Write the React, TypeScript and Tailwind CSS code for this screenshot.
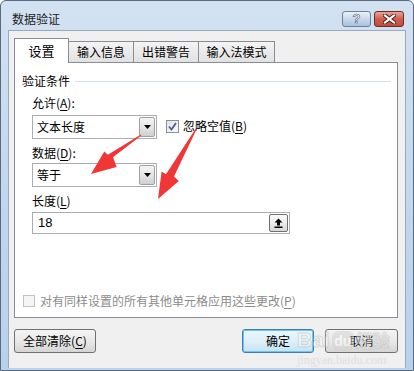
import React from "react";

const font = "font-['Noto_Sans_CJK_SC','Liberation_Sans',sans-serif]";

const Caret = () => (
  <svg width="7" height="4" viewBox="0 0 7 4">
    <path d="M0 0h7L3.5 4z" fill="#000" />
  </svg>
);

const Combo = ({ value }: { value: string }) => (
  <div className="flex h-[24px] w-[125px] items-center border border-[#abadb3] bg-white">
    <span className="flex-1 pl-[4px] text-[12px] leading-[16px] text-black">{value}</span>
    <div className="mr-[1px] flex h-[20px] w-[16px] items-center justify-center rounded-[2px] border border-[#a0a0a0] bg-gradient-to-b from-[#f4f4f4] via-[#e6e6e6] to-[#cfcfcf]">
      <Caret />
    </div>
  </div>
);

const Mnemonic = ({ pre, k, post }: { pre: string; k: string; post: string }) => (
  <span>
    {pre}
    <span className="underline underline-offset-2">{k}</span>
    {post}
  </span>
);

const RedArrows = () => (
  <svg
    className="pointer-events-none absolute left-0 top-0"
    width="414"
    height="371"
    viewBox="0 0 414 371"
  >
    <path
      d="M140.4 134.6 L112 156.3 L115.6 166 L90 173 L103.3 150.5 L106.8 153.7 L139.6 133.8 Z"
      fill="#f03636"
    />
    <path
      d="M195.6 128.3 L173 175.5 L177.8 180 L157 198 L160.6 170.6 L165 173.3 L194.6 127.7 Z"
      fill="#f03636"
    />
  </svg>
);

// faint baidu jingyan watermark over the bottom right corner
const Watermark = () => (
  <div className="pointer-events-none absolute left-[296px] top-[327px] flex flex-col items-start opacity-50">
    <div className="flex items-end gap-[2px] text-[21px] font-bold leading-[23px] text-white [-webkit-text-stroke:1px_#bdbdbd]">
      <span className="font-['Liberation_Sans',sans-serif]">Bai</span>
      <span className="flex h-[20px] w-[22px] items-center justify-center rounded-[6px] bg-[#d2d2d2] font-['Liberation_Sans',sans-serif] text-[14px] text-white [-webkit-text-stroke:0px]">
        du
      </span>
      <span className="text-[17px]">经验</span>
    </div>
    <span className="mt-[2px] font-['Liberation_Serif',serif] text-[12px] leading-[14px] text-[#cfcfcf]">
      jingyan.baidu.com
    </span>
  </div>
);

export default function App() {
  return (
    <div className={`h-[371px] w-[414px] overflow-hidden bg-white ${font}`}>
      <div className="relative flex h-full flex-col rounded-t-[6px] border border-[#5a6b80] bg-gradient-to-b from-[#d3e2f2] via-[#c3d7ed] to-[#b9d1ea]">
        {/* title bar */}
        <div className="flex h-[29px] items-center pl-[11px] pr-[9px] pt-[6px]">
          <span className="flex-1 text-[12px] leading-[16px] text-[#1b1b1b]">数据验证</span>
          <div className="flex items-center gap-[3px]">
            <div className="flex h-[16px] w-[29px] items-center justify-center rounded-[3px] border border-[#6f819a] bg-gradient-to-b from-[#eaf1f9] via-[#c9d9ea] to-[#aac2dc]">
              <span className="font-['Liberation_Sans',sans-serif] text-[13px] font-bold leading-[14px] text-white [-webkit-text-stroke:0.6px_#51637b]">
                ?
              </span>
            </div>
            <div className="flex h-[16px] w-[30px] items-center justify-center rounded-[3px] border border-[#6e2c26] bg-gradient-to-b from-[#e8a497] via-[#cf5d4f] to-[#c04c3c]">
              <svg width="13" height="10" viewBox="0 0 13 10">
                <path d="M2 1.5L11 8.5M11 1.5L2 8.5" stroke="#4b1a16" strokeWidth="4" strokeLinecap="square" />
                <path d="M2 1.5L11 8.5M11 1.5L2 8.5" stroke="#fff" strokeWidth="2.2" strokeLinecap="square" />
              </svg>
            </div>
          </div>
        </div>

        {/* client area */}
        <div className="mx-[7px] flex h-[338px] flex-col border-x border-t border-[#98aac0] bg-[#f0f0f0] pl-[5px] pt-[7px] text-[12px] leading-[16px] text-black">
          {/* tabs */}
          <div className="flex h-[24px] items-end">
            <div className="relative z-10 -mb-px flex h-[25px] w-[55px] items-center justify-center border-x border-t border-[#898c95] bg-white pb-[1px] text-[13px]">
              设置
            </div>
            <div className="flex h-[21px] w-[65px] items-center justify-center border-r border-t border-[#898c95] bg-gradient-to-b from-[#f4f4f4] to-[#e1e1e1]">
              输入信息
            </div>
            <div className="flex h-[21px] w-[65px] items-center justify-center border-r border-t border-[#898c95] bg-gradient-to-b from-[#f4f4f4] to-[#e1e1e1]">
              出错警告
            </div>
            <div className="flex h-[21px] w-[76px] items-center justify-center border-r border-t border-[#898c95] bg-gradient-to-b from-[#f4f4f4] to-[#e1e1e1]">
              输入法模式
            </div>
          </div>

          {/* panel */}
          <div className="flex h-[256px] w-[384px] flex-col border border-[#898c95] bg-white">
            <div className="mt-[10px] flex items-center pl-[7px] pr-[6px]">
              <span>验证条件</span>
              <div className="ml-[5px] h-px flex-1 bg-[#d5dfe5]" />
            </div>

            <div className="mt-[6px] pl-[17px]">
              <Mnemonic pre="允许(" k="A" post="):" />
            </div>
            <div className="mt-[4px] flex items-start pl-[17px]">
              <Combo value="文本长度" />
              <div className="ml-[9px] mt-[3px] flex items-center">
                <div className="flex h-[13px] w-[13px] items-center justify-center border border-[#8e8f8f] bg-gradient-to-br from-[#dfe3e8] to-[#fbfbfb]">
                  <svg width="9" height="9" viewBox="0 0 9 9">
                    <path d="M1 4.5L3.5 7.5L8 1" fill="none" stroke="#4a5f97" strokeWidth="1.8" />
                  </svg>
                </div>
                <span className="ml-[4px]">
                  <Mnemonic pre="忽略空值(" k="B" post=")" />
                </span>
              </div>
            </div>

            <div className="mt-[6px] pl-[17px]">
              <Mnemonic pre="数据(" k="D" post="):" />
            </div>
            <div className="mt-[2px] pl-[17px]">
              <Combo value="等于" />
            </div>

            <div className="mt-[6px] pl-[17px]">
              <Mnemonic pre="长度(" k="L" post=")" />
            </div>
            <div className="mt-[3px] pl-[17px]">
              <div className="flex h-[22px] w-[258px] items-center border border-[#abadb3] bg-white">
                <span className="flex-1 pl-[5px] font-['Liberation_Sans',sans-serif] text-[13px]">18</span>
                <div className="mr-[1px] flex h-[18px] w-[19px] items-center justify-center rounded-[2px] border border-[#707070] bg-gradient-to-b from-[#fafafa] via-[#ececec] to-[#d6d6d6]">
                  <svg width="9" height="10" viewBox="0 0 9 10">
                    <path d="M4.5 0.5L8.5 4.5H6V7.5H3V4.5H0.5Z" fill="#000" />
                    <rect x="0.5" y="8.5" width="8" height="1.5" fill="#000" />
                  </svg>
                </div>
              </div>
            </div>

            <div className="mt-[59px] flex items-center pl-[8px] text-[#8b8b8b]">
              <div className="h-[12px] w-[12px] border border-[#c2c2c2] bg-[#f5f5f5]" />
              <span className="ml-[5px]">
                <Mnemonic pre="对有同样设置的所有其他单元格应用这些更改(" k="P" post=")" />
              </span>
            </div>
          </div>

          {/* buttons */}
          <div className="mt-[11px] flex items-center pr-[7px]">
            <div className="flex h-[24px] w-[82px] items-center justify-center rounded-[3px] border border-[#707070] bg-gradient-to-b from-[#f4f4f4] via-[#e9e9e9] to-[#d5d5d5]">
              <Mnemonic pre="全部清除(" k="C" post=")" />
            </div>
            <div className="flex-1" />
            <div className="flex h-[24px] w-[72px] items-center justify-center rounded-[3px] border border-[#3c7fb1] bg-gradient-to-b from-[#eaf6fd] via-[#dff0fa] to-[#c4e3f5] shadow-[inset_0_0_0_1px_#6ec6ee]">
              确定
            </div>
            <div className="ml-[11px] flex h-[24px] w-[73px] items-center justify-center rounded-[3px] border border-[#707070] bg-gradient-to-b from-[#f4f4f4] via-[#e9e9e9] to-[#d5d5d5]">
              取消
            </div>
          </div>
        </div>

        <RedArrows />
        <Watermark />
      </div>
    </div>
  );
}
